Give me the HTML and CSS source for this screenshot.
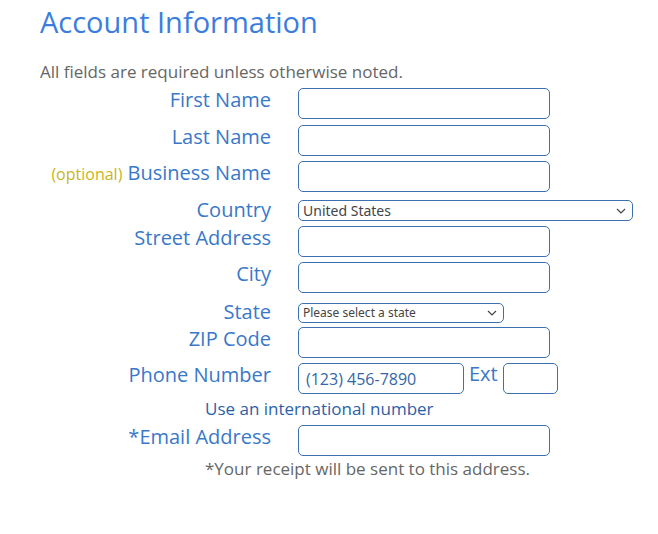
FILE: index.html
```html
<!DOCTYPE html>
<html>
<head>
<meta charset="utf-8">
<link rel="stylesheet" href="styles.css">
</head>
<body>
<div class="page">
  <h1 class="title">Account Information</h1>
  <p class="note">All fields are required unless otherwise noted.</p>
  <form class="form">
    <div class="row row-text">
      <label class="label">First Name</label>
      <input class="field" type="text">
    </div>
    <div class="row row-text">
      <label class="label">Last Name</label>
      <input class="field" type="text">
    </div>
    <div class="row row-text">
      <label class="label"><span class="optional">(optional)</span> Business Name</label>
      <input class="field" type="text">
    </div>
    <div class="row row-select row-country">
      <label class="label">Country</label>
      <div class="select select-country"><span>United States</span><svg class="chev" width="10" height="6" viewBox="0 0 10 6"><path d="M1 1l4 4 4-4" fill="none" stroke="#444" stroke-width="1.2"/></svg></div>
    </div>
    <div class="row row-text">
      <label class="label">Street Address</label>
      <input class="field" type="text">
    </div>
    <div class="row row-text">
      <label class="label">City</label>
      <input class="field" type="text">
    </div>
    <div class="row row-select row-state">
      <label class="label">State</label>
      <div class="select select-state"><span>Please select a state</span><svg class="chev" width="10" height="6" viewBox="0 0 10 6"><path d="M1 1l4 4 4-4" fill="none" stroke="#444" stroke-width="1.2"/></svg></div>
    </div>
    <div class="row row-text">
      <label class="label">ZIP Code</label>
      <input class="field" type="text">
    </div>
    <div class="row row-text">
      <label class="label">Phone Number</label>
      <input class="field field-phone" type="text" value="(123) 456-7890">
      <span class="ext">Ext</span>
      <input class="field field-ext" type="text">
    </div>
    <p class="hint hint-intl">Use an international number</p>
    <div class="row row-text">
      <label class="label">*Email Address</label>
      <input class="field" type="text">
    </div>
    <p class="hint hint-receipt">*Your receipt will be sent to this address.</p>
  </form>
</div>
</body>
</html>
```
FILE: styles.css
```css
html, body {
  margin: 0;
  padding: 0;
  background: #ffffff;
}
.page {
  padding: 2px 0 0 40px;
  font-family: "Open Sans", "Noto Sans", sans-serif;
}
.title {
  margin: 0;
  font-size: 29px;
  font-weight: 400;
  line-height: 40px;
  color: #3b7ddd;
}
.note {
  margin: 18px 0 0 0;
  font-size: 17px;
  line-height: 23px;
  color: #666666;
}
.form {
  margin-top: 5px;
}
.row {
  display: flex;
  align-items: flex-start;
}
.row-text {
  padding-bottom: 5.5px;
}
.row-country {
  padding-top: 2.5px;
  padding-bottom: 4.5px;
}
.row-state {
  padding-top: 4.3px;
  padding-bottom: 4px;
}
.label {
  width: 231px;
  flex: none;
  text-align: right;
  font-size: 20px;
  line-height: 27px;
  margin: -2px 0 -10px 0;
  color: #3a78c9;
}
.row-select .label {
  margin-top: -4.5px;
}
.optional {
  font-size: 16px;
  color: #c9b51b;
}
.field {
  box-sizing: border-box;
  margin: 0 0 0 27px;
  width: 252px;
  height: 31px;
  border: 1px solid #3d70b0;
  border-radius: 5px;
  padding: 0 7px;
  font-family: "Open Sans", sans-serif;
  font-size: 16px;
  color: #3567a8;
  background: #fff;
  outline: none;
}
.field-phone {
  width: 166px;
}
.ext {
  margin-left: 5px;
  font-size: 20px;
  line-height: 27px;
  margin-top: -3px;
  color: #3a78c9;
}
.field-ext {
  margin-left: 5px;
  width: 55px;
}
.select {
  box-sizing: border-box;
  margin-left: 27px;
  display: flex;
  align-items: center;
  justify-content: space-between;
  border: 1px solid #3d70b0;
  border-radius: 5px;
  padding: 0 6px 0 4px;
  font-family: "Noto Sans", sans-serif;
  color: #444;
  background: #fff;
}
.select-country {
  width: 335px;
  height: 21px;
  font-size: 14px;
}
.select-state {
  width: 206px;
  height: 20px;
  font-size: 12px;
}
.chev {
  flex: none;
}
.hint {
  margin: 0 0 0 165px;
  font-size: 17px;
  line-height: 25px;
}
.hint-intl {
  margin-top: -4px;
  margin-bottom: 4px;
  color: #2d5fa8;
}
.hint-receipt {
  margin-top: -5px;
  color: #666666;
}
```
